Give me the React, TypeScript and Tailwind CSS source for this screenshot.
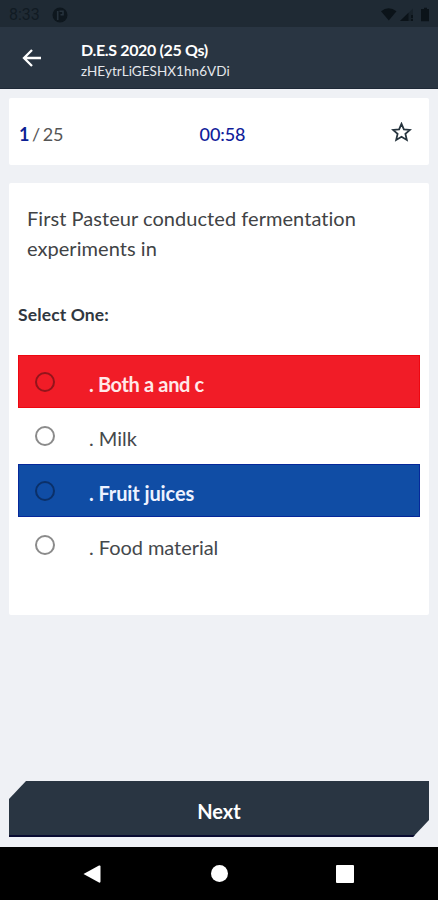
const options = [
  { label: '. Both a and c', row: 'bg-[#f11c27] border-[#ee0710] text-[#ffe9e9] font-bold tracking-[-0.35px]', text: 'pt-[5px]', ring: 'border-[#93141b]' },
  { label: '. Milk', row: 'bg-white border-white text-[#45484c]', text: 'pt-[3px]', ring: 'border-[#8b8b8b]' },
  { label: '. Fruit juices', row: 'bg-[#104da5] border-[#06289a] text-[#eef2ff] font-bold tracking-[-0.1px]', text: 'pt-[5px]', ring: 'border-[#0b3069]' },
  { label: '. Food material', row: 'bg-white border-white text-[#45484c] tracking-[-0.05px]', text: 'pt-[3px]', ring: 'border-[#8b8b8b]' },
];

function StatusBar() {
  return (
    <div className="flex h-[27px] items-center bg-[#1f2a34] pt-[2px] pl-[9px] pr-[8px] text-[#111b23]">
      <span className="w-[43px] font-[Roboto,sans-serif] text-[16px] leading-none">8:33</span>
      <svg width="16" height="16" viewBox="0 0 16 16">
        <circle cx="8" cy="8" r="7.5" fill="#0e171e" />
        <path d="M5.700 13V4M7.500 4.300h3.500v3.500H8.500" fill="none" stroke="#26323c" strokeWidth="1.6" />
      </svg>
      <svg className="ml-auto" width="50" height="16" viewBox="0 0 50 16" fill="#0b1319">
        <path d="M1 4.2Q8.5-1.5 16.500 4.200L8.800 13.500Z" />
        <path d="M20 14L33 1.500V14Z" opacity=".35" />
        <path d="M20 14L28.500 5.800V14ZM31 8h2v3h-2zM31 12h2v2h-2z" />
        <path d="M42 2h2V.8h3V2h2v12.200h-8V2z" />
      </svg>
    </div>
  );
}

function Header() {
  return (
    <header className="flex h-[62px] items-center border-b border-[#1e2937] bg-[#293542] text-white">
      <svg className="ml-[22px]" width="20" height="20" viewBox="0 0 20 20" fill="none" stroke="white" strokeWidth="2.3">
        <path d="M10 2L2 10l8 8M2 10h17" />
      </svg>
      <div className="ml-[39px] flex flex-col pt-[5px]">
        <h1 className="h-[22px] text-[16px] leading-[22px] font-bold tracking-[-0.35px] whitespace-nowrap">D.E.S 2020 (25 Qs)</h1>
        <p className="h-[21px] text-[13.5px] leading-[21px] font-normal tracking-[0.05px] whitespace-nowrap text-[#e5e8ec]">zHEytrLiGESHX1hn6VDi</p>
      </div>
    </header>
  );
}

export default function App() {
  return (
    <div className="flex h-[900px] w-[438px] flex-col overflow-hidden bg-[#eff1f5] font-[Lato,sans-serif]">
      <StatusBar />
      <Header />
      <section className="mx-[9px] mt-[9px] grid h-[67px] shrink-0 grid-cols-3 items-center rounded-[2px] bg-white pt-[5px] pr-[17px] pl-[10px] text-[18px]">
        <p className="tracking-[-0.2px] [word-spacing:-1.6px] text-[#555]"><b className="text-[#0c1f94]">1</b> / 25</p>
        <p className="pl-[14px] text-center font-medium tracking-[-0.1px] text-[#10209a]">00:58</p>
        <svg className="mb-[5px] justify-self-end" width="21" height="20" viewBox="0 0 21 20" fill="none" stroke="#26343e" strokeWidth="1.8">
          <path d="M10.500 1.800L12.900 7.400L19 7.900L14.400 11.900L15.800 17.900L10.500 14.700L5.200 17.900L6.600 11.900L2 7.900L8.100 7.400Z" />
        </svg>
      </section>
      <main className="mx-[9px] mt-[18px] h-[432px] shrink-0 rounded-[2px] bg-white px-[9px] pt-[20px]">
        <p className="px-[9px] text-[20px] leading-[30px] tracking-[0.05px] text-[#414345]">
          First Pasteur conducted fermentation<br />experiments in
        </p>
        <h2 className="mt-[42px] h-[20px] text-[17.5px] leading-[20px] font-bold tracking-[0.13px] text-[#303740]">Select One:</h2>
        <ul className="mt-[30px] flex w-[402px] flex-col gap-[1.660px]">
          {options.map((o) => (
            <li key={o.label} className={`flex h-[53px] items-center border pl-[16px] text-[20px] ${o.row}`}>
              <span className={`size-[20px] rounded-full border-2 ${o.ring}`} />
              <span className={`ml-[34px] leading-[24px] whitespace-nowrap ${o.text}`}>{o.label}</span>
            </li>
          ))}
        </ul>
      </main>
      <button className="mx-[9px] mt-auto mb-[10px] h-[56px] shrink-0 border-b-2 border-[#080b30] bg-[#293542] pt-[5px] text-[20px] font-bold text-white [clip-path:polygon(17px_0,100%_0,100%_39px,404px_100%,0_100%,0_18px)]">Next</button>
      <nav className="flex h-[53px] shrink-0 items-center bg-black">
        <svg className="ml-[83px]" width="18" height="18" viewBox="0 0 18 18" fill="white"><path d="M0.500 9L16 .5Q17.500 0 17.500 1.500V16.500Q17.500 18 16 17.500Z" /></svg>
        <span className="ml-[110px] size-[17px] rounded-full bg-white" />
        <span className="ml-[108px] size-[18px] rounded-[1px] bg-white" />
      </nav>
    </div>
  );
}
